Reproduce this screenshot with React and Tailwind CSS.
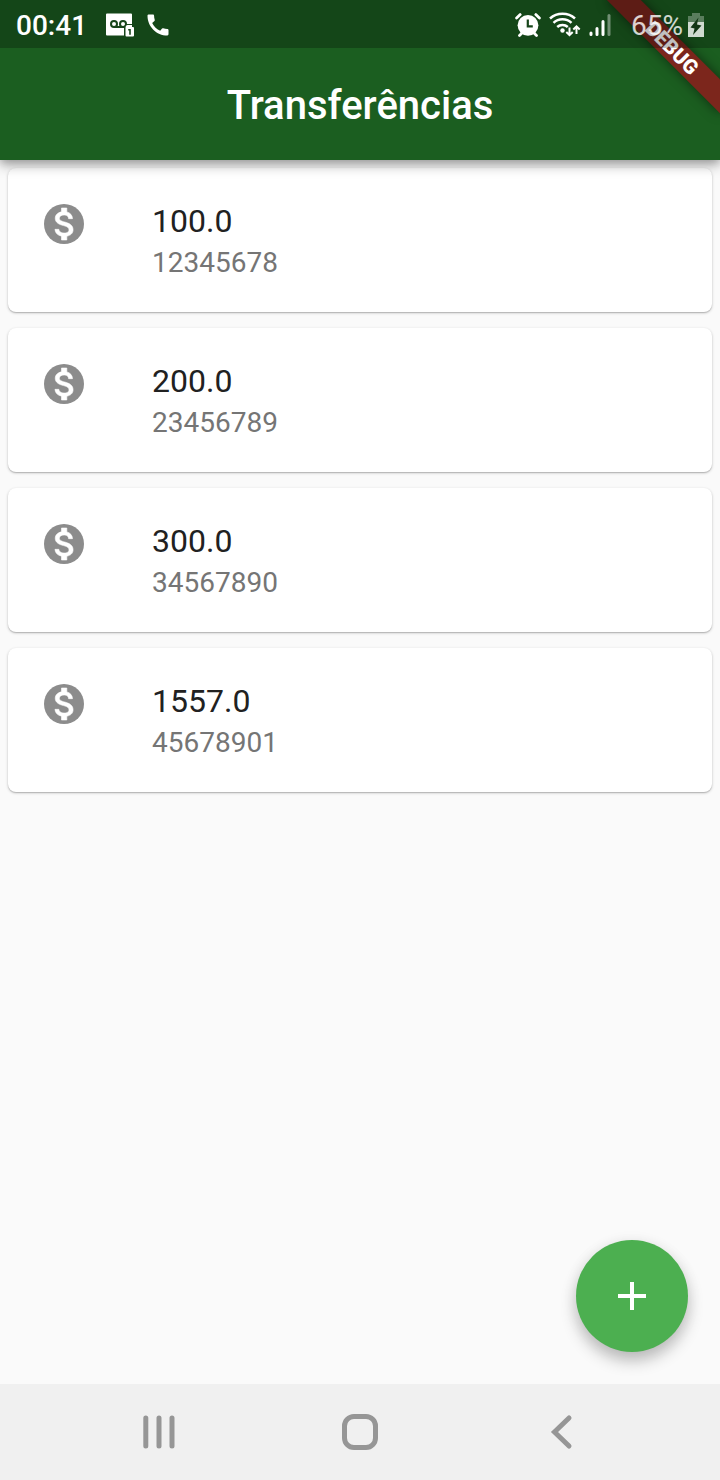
import { MdCall } from "react-icons/md";

const transfers = [
  { amount: "100.0", account: "12345678" },
  { amount: "200.0", account: "23456789" },
  { amount: "300.0", account: "34567890" },
  { amount: "1557.0", account: "45678901" },
];

function MoneyIcon() {
  return (
    <svg className="size-12" viewBox="0 0 24 24">
      <circle cx="12" cy="12" r="10" fill="#8c8c8c" />
      <path
        fill="#fff"
        stroke="#fff"
        strokeWidth=".3"
        d="M13.410 18.090V20h-2.670v-1.930c-1.710-.36-3.160-1.460-3.270-3.400h1.960c.1 1.050.82 1.870 2.650 1.870 1.960 0 2.400-.98 2.400-1.590 0-.83-.44-1.610-2.670-2.140-2.480-.6-4.180-1.620-4.180-3.670 0-1.720 1.390-2.840 3.110-3.210V4h2.670v1.950c1.860.45 2.790 1.860 2.850 3.390H14.300c-.05-1.110-.64-1.870-2.220-1.870-1.500 0-2.400.68-2.400 1.640 0 .84.65 1.390 2.670 1.910s4.180 1.390 4.180 3.910c-.01 1.830-1.380 2.830-3.120 3.160z"
      />
    </svg>
  );
}

function VoicemailIcon() {
  return (
    <svg className="ml-5 h-6 w-7" viewBox="0 0 28 24">
      <path fill="#fff" d="M1 .5h24a1 1 0 0 1 1 1V12h-7v10.500H1a1 1 0 0 1-1-1v-20a1 1 0 0 1 1-1z" />
      <g fill="none" stroke="#17451a" strokeWidth="2">
        <circle cx="8" cy="11" r="3" />
        <circle cx="17" cy="11" r="3" />
        <path d="M8 14h10" />
      </g>
      <path fill="#17451a" d="M18 13.500l2-2.500h7v13h-9z" />
      <path fill="#fff" d="M21.500 12h4.500v2h1a1 1 0 0 1 1 1v7.500a1 1 0 0 1-1 1h-6.500a1 1 0 0 1-1-1v-8a2.500 2.500 0 0 1 2-2.500z" />
      <path fill="none" stroke="#17451a" strokeWidth="1.600" d="M22.200 16.800h1.800v5" />
    </svg>
  );
}

function AlarmIcon() {
  return (
    <svg className="h-6 w-[26px]" viewBox="0 0 26 24">
      <g stroke="#fff" strokeWidth="2.800" strokeLinecap="round">
        <path d="M1.600 5l3.600-3.400M24.400 5l-3.600-3.400M4.500 22.500l3-3M21.500 22.500l-3-3" />
      </g>
      <circle cx="13" cy="12.300" r="10.400" fill="#fff" />
      <path d="M12.800 6.500v6.800h5" fill="none" stroke="#17451a" strokeWidth="2.200" />
    </svg>
  );
}

function WifiIcon() {
  return (
    <svg className="ml-2 mr-px h-[26px] w-8" viewBox="0 0 32 26">
      <g fill="none" stroke="#fff" strokeWidth="2.500">
        <path d="M1 6.500C8 .2 19 .2 26 6.500" />
        <path d="M4.500 10.800c5-4.600 13-4.600 18 0" />
        <path d="M8.200 15c3-2.700 7.600-2.700 10.600 0" />
      </g>
      <circle cx="13.500" cy="18.500" r="2.200" fill="#fff" />
      <g fill="none" stroke="#fff" strokeWidth="2">
        <path d="M20.500 15.500v8M17.300 20l3.200 3.200 3.200-3.200M27.500 22v-8M24.300 17.500l3.200-3.200 3.200 3.200" />
      </g>
    </svg>
  );
}

function SignalIcon() {
  return (
    <svg className="ml-[7px] h-6 w-[22px]" viewBox="0 0 22 24">
      <g stroke="#fff" strokeWidth="3" strokeLinecap="round">
        <path d="M2 20v1.500M8 15.500v6M14 8.500v13" />
        <path d="M20 2.500v19" opacity=".4" />
      </g>
    </svg>
  );
}

function BatteryIcon() {
  return (
    <svg className="ml-[5px] h-6 w-4" viewBox="0 0 16 24">
      <path fill="#fff" opacity=".3" d="M4 0h8v3h4v6H0V3h4z" />
      <path fill="#fff" opacity=".8" d="M0 9h16v15H0z" />
      <path fill="#123514" d="M10.500 4.500L2.500 14.500l4 1-1.500 6.500 8.500-9.500-4.500-1z" />
    </svg>
  );
}

function StatusBar() {
  return (
    <div className="relative z-30 flex h-12 items-center bg-black/25 pl-4 pr-4 pt-0.5 text-white">
      <span className="w-[70px] whitespace-nowrap pt-px text-[28px] leading-8 font-medium">00:41</span>
      <VoicemailIcon />
      <MdCall className="ml-[10px] size-7" />
      <div className="ml-auto flex items-center">
        <AlarmIcon />
        <WifiIcon />
        <SignalIcon />
        <span className="ml-5 w-[52px] whitespace-nowrap pt-px text-[28px] leading-8 text-white/80">65%</span>
        <BatteryIcon />
      </div>
    </div>
  );
}

function DebugBanner() {
  return (
    <div className="pointer-events-none absolute top-0 right-0 z-20 size-[150px] overflow-hidden">
      <div className="absolute top-[56px] left-[70px] flex h-6 w-40 origin-[80px_-56px] rotate-45 items-center justify-center bg-[#7c261c] text-[20.400px] leading-6 font-black text-white shadow-[0_0_12px_rgba(0,0,0,0.5)]">
        DEBUG
      </div>
    </div>
  );
}

function TransferCard({ amount, account }) {
  return (
    <li className="flex h-36 items-start rounded-lg bg-white pt-8 pl-8 shadow-[0_1px_3px_rgba(0,0,0,0.22),0_1px_1px_rgba(0,0,0,0.14)]">
      <MoneyIcon />
      <div className="ml-16">
        <p className="text-[32px] leading-[42px] text-[#212121]">{amount}</p>
        <p className="text-[28px] leading-[42px] text-[#757575]">{account}</p>
      </div>
    </li>
  );
}

function NavigationBar() {
  return (
    <nav className="grid h-24 grid-cols-[318px_84px_318px] items-center justify-items-center bg-[#f0f0f0] text-[#969696]">
      <svg className="size-9" viewBox="0 0 36 36" fill="none" stroke="currentColor" strokeWidth="5" strokeLinecap="round">
        <path d="M4.800 4v28M18 4v28M31 4v28" />
      </svg>
      <svg className="size-9" viewBox="0 0 36 36" fill="none" stroke="currentColor" strokeWidth="5">
        <rect x="2.500" y="2.500" width="31" height="31" rx="9.500" />
      </svg>
      <svg className="size-9" viewBox="0 0 36 36" fill="none" stroke="currentColor" strokeWidth="5" strokeLinecap="round">
        <path d="M26 4L11.500 18l14.500 14" />
      </svg>
    </nav>
  );
}

export default function App() {
  return (
    <div className="relative flex h-[1480px] w-[720px] flex-col overflow-hidden bg-[#fafafa] font-['Roboto',sans-serif]">
      <header className="relative z-10 h-40 bg-[#1b5e20] shadow-[0_5px_12px_rgba(0,0,0,0.32),0_2px_8px_rgba(0,0,0,0.14)]">
        <DebugBanner />
        <StatusBar />
        <h1 className="flex h-28 items-center justify-center pt-1 text-[40px] font-medium text-white">Transferências</h1>
      </header>
      <main className="relative flex-1 p-2">
        <ul className="flex flex-col gap-4">
          {transfers.map((t) => (
            <TransferCard key={t.account} {...t} />
          ))}
        </ul>
        <button aria-label="+" className="absolute right-8 bottom-8 flex size-28 items-center justify-center rounded-full bg-[#4caf50] shadow-[0_9px_16px_rgba(0,0,0,0.24),0_2px_16px_rgba(0,0,0,0.06)]">
          <svg className="size-12" viewBox="0 0 24 24" fill="#fff">
            <path d="M19 13h-6v6h-2v-6H5v-2h6V5h2v6h6v2z" />
          </svg>
        </button>
      </main>
      <NavigationBar />
    </div>
  );
}
